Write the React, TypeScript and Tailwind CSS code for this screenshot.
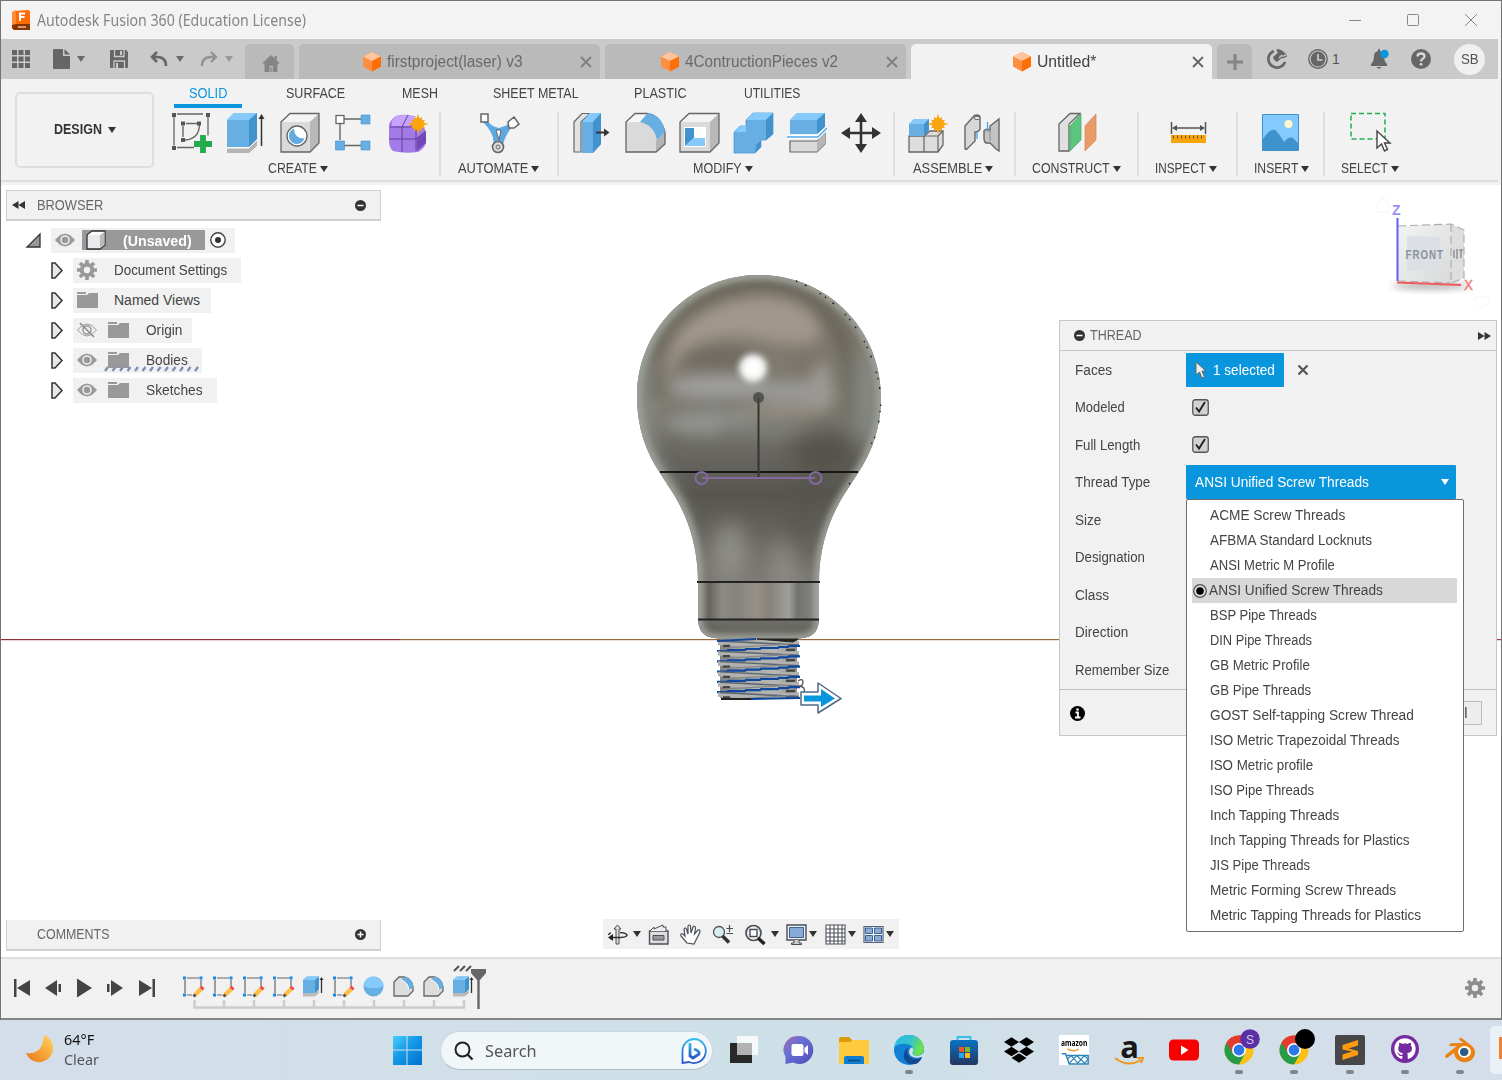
import { useLayoutEffect, useRef, useState } from "react";
import type { ReactNode } from "react";
import { SiDropbox, SiBlender } from "react-icons/si";
import { FaGithub } from "react-icons/fa";

/* Single line of text condensed or widened so that it spans a given width. */
function Fit({ w, className = "", children }: { w: number; className?: string; children: string }) {
  const ref = useRef<HTMLSpanElement>(null);
  const [natural, setNatural] = useState(w);
  useLayoutEffect(() => {
    if (ref.current) setNatural(ref.current.offsetWidth);
  }, [children]);
  return (
    <span className={`inline-block whitespace-pre ${className}`} style={{ width: `${w}px` }}>
      <span ref={ref} className="inline-block origin-left" style={{ transform: `scaleX(${w / natural})` }}>
        {children}
      </span>
    </span>
  );
}

function Caret({ className = "text-[#333]" }: { className?: string }) {
  return (
    <svg viewBox="0 0 8 6" className={`h-[6px] w-[8px] shrink-0 ${className}`}>
      <path d="M0 0H8L4 6Z" fill="currentColor" />
    </svg>
  );
}

function Ico({ children, className = "h-10 w-10", box = "0 0 40 40" }: { children: ReactNode; className?: string; box?: string }) {
  return (
    <svg viewBox={box} className={`shrink-0 overflow-visible ${className}`} fill="none">
      {children}
    </svg>
  );
}

const G = "#666";
const B1 = "#67aee3";
const B2 = "#86c9fb";
const B3 = "#4292cd";

function Star({ x, y }: { x: number; y: number }) {
  const pts: string[] = [];
  for (let i = 0; i < 24; i++) {
    const r = i % 2 ? 5.6 : i % 6 === 0 ? 10.5 : 8;
    const a = (i * Math.PI) / 12;
    pts.push(`${(x + r * Math.sin(a)).toFixed(2)},${(y - r * Math.cos(a)).toFixed(2)}`);
  }
  return <polygon points={pts.join(" ")} fill="#f8a40c" />;
}

function Cube() {
  return (
    <Ico box="0 0 18 20" className="h-5 w-[18px]">
      <path d="M9 0L18 4.5V14.5L9 19.500L0 14.500V4.500Z" fill="#ff8f40" />
      <path d="M9 0L18 4.500L9 9L0 4.500Z" fill="#ffc59f" />
      <path d="M9 9L18 4.500V14.500L9 19.500Z" fill="#ff6e05" />
    </Ico>
  );
}

/* ---------- title and tabs ---------- */

function TitleBar() {
  return (
    <div className="flex h-[38px] items-center bg-[#f3f3f3] pl-[11px] pr-[24px]">
      <Ico box="0 0 18 20" className="h-5 w-[18px]">
        <path d="M2 1L16 0Q18 0 18 2V20H2L0 18V3Z" fill="#ff6b00" />
        <path d="M0 14H18V20H2L0 18Z" fill="#8a3500" />
        <path d="M0 2L4 0V14L0 15Z" fill="#ff8b35" />
        <path d="M8 11V3.500H13M8 7H12.500" stroke="#fff" strokeWidth="2" />
        <path d="M6 17H14" stroke="#e8c0a0" strokeWidth="1.500" />
      </Ico>
      <Fit w={269} className="ml-[7px] font-['Noto_Sans'] text-[15.500px] leading-[37px] text-[#858585]">Autodesk Fusion 360 (Education License)</Fit>
      <div className="ml-auto flex items-center gap-[46px]">
        <Ico box="0 0 12 12" className="h-3 w-3"><path d="M0 6.500H12" stroke="#888" /></Ico>
        <Ico box="0 0 12 12" className="h-3 w-3"><rect x=".5" y=".5" width="11" height="11" rx="1" stroke="#888" /></Ico>
        <Ico box="0 0 12 12" className="h-3 w-3"><path d="M0 0L12 12M12 0L0 12" stroke="#888" /></Ico>
      </div>
    </div>
  );
}

function DocTab({ name, w, active, left }: { name: string; w: number; active?: boolean; left: string }) {
  return (
    <div className={`mt-[5px] flex h-[35px] w-[301px] items-center rounded-t-[5px] ${left} ${active ? "bg-[#f2f2f2] text-[#444]" : "bg-[#bababa] text-[#696969]"}`}>
      <Cube />
      <Fit w={w} className="ml-[6px] pt-px text-[16px]">{name}</Fit>
      <Ico box="0 0 10 10" className="ml-auto mr-[9px] h-[10px] w-[10px]">
        <path d="M0 0L10 10M10 0L0 10" stroke={active ? "#666" : "#808080"} strokeWidth="1.800" />
      </Ico>
    </div>
  );
}

function TabBar() {
  return (
    <div className="mr-[3px] flex h-10 bg-[#cacaca]">
      <div className="flex h-10 w-[244px] items-center pl-[11px]">
        <Ico box="0 0 18 18" className="h-[18px] w-[18px]">
          {[0, 6.500, 13].map((x) => [0, 6.500, 13].map((y) => <rect key={`${x}-${y}`} x={x} y={y} width="5" height="5" fill={G} />))}
        </Ico>
        <Ico box="0 0 17 20" className="ml-[23px] h-5 w-[17px]">
          <path d="M1 0H10V7H17V19Q17 20 16 20H1Q0 20 0 19V1Q0 0 1 0ZM11.500 0L17 5.500H11.500Z" fill={G} />
        </Ico>
        <Caret className="ml-[7px] text-[#6a6a6a]" />
        <Ico box="0 0 18 18" className="ml-[25px] h-[18px] w-[18px]">
          <path d="M1 0H16L18 2V17Q18 18 17 18H1Q0 18 0 17V1Q0 0 1 0Z" fill={G} />
          <path d="M4.500 0V6.500H14V0M4 18V11H14.500V18" stroke="#cacaca" strokeWidth="1.300" />
          <path d="M11 1V5" stroke="#cacaca" strokeWidth="2" /><path d="M7 13V18" stroke="#cacaca" strokeWidth="2" />
        </Ico>
        <Ico box="0 0 17 16" className="ml-[23px] h-4 w-[17px]">
          <path d="M6 1L1 6L6 11M1.500 6H7Q15 6.500 15 15" stroke={G} strokeWidth="2.600" />
        </Ico>
        <Caret className="ml-[8px] text-[#6a6a6a]" />
        <Ico box="0 0 17 16" className="ml-[16px] h-4 w-[17px]">
          <path d="M11 1L16 6L11 11M15.500 6H10Q2 6.500 2 15" stroke="#929292" strokeWidth="2.400" />
        </Ico>
        <Caret className="ml-[8px] text-[#999]" />
      </div>
      <div className="mt-[5px] flex h-[35px] w-[49px] items-center justify-center rounded-t-[5px] bg-[#bababa] pt-[4px]">
        <Ico box="0 0 18 17" className="ml-[3px] h-[17px] w-[18px]">
          <path d="M9 0L18 8.500H15.500V17H11V11H7.500V17H2.500V8.500H0ZM12.500 1H15V5L12.500 3Z" fill="#858585" />
          <path d="M8 12H10.500V17H8Z" fill="#9a9a9a" />
        </Ico>
      </div>
      <DocTab name="firstproject(laser) v3" w={135} left="ml-[5px] pl-[64px]" />
      <DocTab name="4ContructionPieces v2" w={153} left="ml-[5px] pl-[56px]" />
      <DocTab name="Untitled*" w={59} active left="ml-[5px] pl-[102px]" />
      <div className="ml-[5px] mt-[5px] flex h-[35px] w-[35px] items-center justify-center rounded-t-[5px] bg-[#bababa]">
        <Ico box="0 0 16 16" className="h-4 w-4"><path d="M8 0V16M0 8H16" stroke="#858585" strokeWidth="3.200" /></Ico>
      </div>
      <div className="flex h-10 items-center pl-[15px]">
        <Ico box="0 0 20 20" className="h-5 w-5">
          <circle cx="10" cy="10" r="8.600" stroke={G} strokeWidth="2.600" strokeDasharray="34 3 6 3 3 5" transform="rotate(20 10 10)" />
          <path d="M13 1L9.500 5L6 8Q7 12 10 13L14 9.500L17 9L20 6L17 3Z" fill={G} />
          <path d="M12 9L14.500 6.500L16 7.300L19.500 5.500" stroke="#cacaca" strokeWidth="1.300" />
        </Ico>
        <Ico box="0 0 20 20" className="ml-[21px] h-5 w-5">
          <circle cx="10" cy="10" r="9.200" stroke={G} strokeWidth="1.400" />
          <circle cx="10" cy="10" r="7.400" fill={G} />
          <path d="M10 5V11H14.500" stroke="#d0d0d0" strokeWidth="1.600" />
        </Ico>
        <span className="ml-[4px] w-[9px] text-[14px] text-[#555]">1</span>
        <Ico box="0 0 20 20" className="ml-[29px] h-5 w-5">
          <path d="M1 17V15Q4 12 4 7Q4 3 8 2V0H10V2Q14 3 14 7Q14 12 17 15V17ZM6.500 18H11.500Q9 21 6.500 18Z" fill={G} />
          <circle cx="14.500" cy="5" r="4.200" fill="#0a96dc" />
        </Ico>
        <Ico box="0 0 20 20" className="ml-[21px] h-5 w-5">
          <circle cx="10" cy="10" r="10" fill={G} />
          <path d="M6.500 7.500Q6.500 4.500 10 4.500Q13.500 4.500 13.500 7.300Q13.500 9 11.500 10Q10 10.800 10 12.500" stroke="#d8d8d8" strokeWidth="2.300" />
          <circle cx="10" cy="15.300" r="1.400" fill="#d8d8d8" />
        </Ico>
        <div className="ml-[23px] flex h-[31px] w-[31px] items-center justify-center rounded-full bg-[#f0f0f0]">
          <Fit w={18} className="text-[14px] text-[#555]">SB</Fit>
        </div>
      </div>
    </div>
  );
}

/* ---------- ribbon icons ---------- */

const icons: Record<string, ReactNode> = {
  sketch: (
    <Ico>
      <path d="M5 2.500H31M2 5V34M5 36H22M36 5V24" stroke={G} strokeWidth="1.300" transform="translate(0 -.5)" />
      <path d="M11 14V25M14 11.500H25M27.500 13Q27 27 13 28" stroke={G} strokeWidth="1.400" />
      {[[0, 1], [34, 1], [0, 34], [9, 9.500], [25, 9.500], [9, 26]].map(([x, y]) => <rect key={`${x}${y}`} x={x} y={y} width="4" height="4" fill="#555" />)}
      <path d="M31 23V41M22 32H40" stroke="#22ac4d" strokeWidth="5.800" />
    </Ico>
  ),
  extrude: (
    <Ico>
      <path d="M1 36H23L31 28V34L23 41H1Z" fill="#b5b5b5" /><path d="M1 36H23L31 28" stroke="#fff" />
      <path d="M1 8L8 1H31V27L23 35H1Z" fill={B1} />
      <path d="M1 8L8 1H31L23 8Z" fill={B2} /><path d="M23 8L31 1V27L23 35Z" fill={B3} />
      <path d="M35.500 4V34" stroke="#333" strokeWidth="1.500" /><path d="M32.500 7L35.500 2L38.500 7Z" fill="#333" />
    </Ico>
  ),
  hole: (
    <Ico>
      <path d="M1 10L10 1.500H39V31L30 40H1Z" fill="#dadada" /><path d="M1 10L10 1.500H39L30 10Z" fill="#f4f4f4" /><path d="M30 10L39 1.500V31L30 40Z" fill="#b8b8b8" />
      <path d="M1 10L10 1.500H39V31L30 40H1Z" stroke={G} strokeWidth="1.300" />
      <circle cx="17" cy="24" r="10" fill="#fff" stroke={G} strokeWidth="1.400" />
      <path d="M14 16.500Q14 26.500 24.500 26.500A8 8 0 1 1 14 16.500Z" fill="#62aae0" />
    </Ico>
  ),
  pattern: (
    <Ico>
      <path d="M10 7H27M6 12V28M10 33.500H27" stroke={G} strokeWidth="1.400" />
      <rect x="2" y="3.500" width="8" height="8" fill="#fff" stroke={G} strokeWidth="1.300" />
      <path d="M27 3H36V12H27ZM27 29H36V38H27ZM1.500 29H10.500V38H1.500Z" fill={B1} stroke={B3} strokeWidth=".6" />
    </Ico>
  ),
  form: (
    <Ico>
      <path d="M1 13Q2 8 8 4Q14 2 22 3L33 9L38 20V31Q36 37 30 40Q16 42 5 39Q1 36 1 28Z" fill="#a27be6" />
      <path d="M8 4Q16 2 28 4L22 14H4Q3 8 8 4Z" fill="#c8a2ff" /><path d="M29 26L38 20V31L29 39Z" fill="#7446b6" />
      <path d="M1 27H28L38 19M14 15V40M2 15H28V39M14 15L20 3" stroke="#61409c" strokeWidth="1" />
      <Star x={30} y={12} />
    </Ico>
  ),
  automate: (
    <Ico>
      <path d="M6 6Q12 15 20 16Q28 14 34 9L36 12Q27 20 24 33L19 40L14 34Q17 23 4 10Z" fill="#5ca9e2" />
      <path d="M17 18H22L20 28Z" fill="#fff" stroke={G} />
      <path d="M2 2H9V10H2ZM35 5L40 12L35 16H30L29 10Z" fill="#fff" stroke={G} strokeWidth="1.500" />
      <circle cx="19" cy="35" r="5.500" fill="#ddd" stroke={G} strokeWidth="1.600" /><circle cx="19" cy="35" r="2" stroke={G} />
    </Ico>
  ),
  press: (
    <Ico>
      <path d="M3 10L11 1.500H19L10 10V40H3Z" fill="#e2e2e2" stroke={G} strokeWidth="1.200" />
      <path d="M11 10L19 1H30V32L22 41H11Z" fill={B1} /><path d="M11 10L19 1H30L22 10Z" fill={B2} /><path d="M22 10L30 1V32L22 41Z" fill={B3} />
      <path d="M25 20.500H35" stroke="#333" strokeWidth="2" /><path d="M33 16.500L38.500 20.500L33 24.500Z" fill="#333" />
    </Ico>
  ),
  fillet: (
    <Ico>
      <path d="M1 10L10 1.500H22Q35 3 40 20V32L31 40H1Z" fill="#dadada" />
      <path d="M1 10L10 1.500H22L15 10Z" fill="#f7f7f7" /><path d="M31 29L40 20V32L31 40Z" fill="#b4b4b4" />
      <path d="M1 10L10 1.500H22Q35 3 40 20V32L31 40H1Z" stroke={G} strokeWidth="1.300" />
      <path d="M15 10L23 1Q37 3 40 20L32 28Q29 13 15 10Z" fill={B1} />
    </Ico>
  ),
  shell: (
    <Ico>
      <path d="M1 10L10 1.500H40V31L31 40H1Z" fill="#dadada" /><path d="M1 10L10 1.500H40L31 10Z" fill="#f4f4f4" /><path d="M31 10L40 1.500V31L31 40Z" fill="#b8b8b8" />
      <path d="M1 10L10 1.500H40V31L31 40H1Z" stroke={G} strokeWidth="1.300" />
      <path d="M5 15H27V35H5Z" fill="#fff" /><path d="M6 16L15 16V26L6 34Z" fill={B3} /><path d="M6 34L15 26H26V34Z" fill={B2} />
    </Ico>
  ),
  combine: (
    <Ico>
      <path d="M1 20L7 14H13V8L20 1H40V22L33 28H28V35L22 41H1Z" fill={B1} stroke={B3} strokeWidth=".7" />
      <path d="M13 8L20 1H40L33 8ZM1 20L7 14H13V20Z" fill={B2} /><path d="M33 8L40 1V22L33 28ZM23 33L28 28V35L22 41Z" fill={B3} />
    </Ico>
  ),
  split: (
    <Ico>
      <path d="M3 8L10 1H38V15L30 22H3Z" fill={B1} /><path d="M3 8L10 1H38L30 8Z" fill={B2} /><path d="M30 8L38 1V15L30 22Z" fill={B3} />
      <path d="M3 29H30L38 21V32L30 40H3Z" fill="#dadada" stroke={G} strokeWidth="1.200" /><path d="M30 29L38 21V32L30 40Z" fill="#b5b5b5" />
      <path d="M0 25H31L40 16" stroke="#fff" strokeWidth="4" /><path d="M0 25H31L40 16" stroke="#4eaced" strokeWidth="1.500" />
    </Ico>
  ),
  move: (
    <Ico>
      <path d="M20 6V36M5 21H35" stroke="#333" strokeWidth="2.600" />
      <path d="M14 10L20 1L26 10ZM14 32L20 41L26 32ZM9 15L0 21L9 27ZM31 15L40 21L31 27Z" fill="#333" />
    </Ico>
  ),
  assemble: (
    <Ico>
      <path d="M1 24H16L22 19H35V33L30 40H1Z" fill="#ddd" stroke={G} strokeWidth="1.300" /><path d="M16 24H30V40M16 24V40M30 24L35 19" stroke={G} strokeWidth="1.200" />
      <path d="M1 12L6 7H21V18L16 24H1Z" fill={B1} /><path d="M1 12L6 7H21L16 12Z" fill={B2} /><path d="M16 12L21 7V18L16 24Z" fill={B3} />
      <Star x={30} y={12} />
    </Ico>
  ),
  joint: (
    <Ico>
      <path d="M3 14L11 5Q12 3 15 3Q18 3 18 6V17Q17 20 13 20V29L5 37Q3 38 3 36Z" fill="#d8d8d8" stroke={G} strokeWidth="1.400" />
      <path d="M37 7V39L34 37L28 31H24Q22 30 22 27V19Q24 16 28 18V14Z" fill="#c4c4c4" stroke={G} strokeWidth="1.400" />
      <path d="M28 15V29" stroke="#8a8a8a" /><ellipse cx="15" cy="6" rx="3" ry="1.600" fill="#eee" stroke={G} />
      <path d="M15 20V27M25.500 10V20" stroke="#40a6ef" strokeWidth="1.300" />
    </Ico>
  ),
  construct: (
    <Ico>
      <path d="M2 12L13 1.500H23L12 12V39H2Z" fill="#e0e0e0" stroke={G} strokeWidth="1.300" />
      <path d="M13 14L24 2V28L13 39Z" fill="#5cc57e" stroke="#43ac64" strokeWidth=".7" /><path d="M28 14L39 2V28L28 39Z" fill="#e89b66" stroke="#d48650" strokeWidth=".7" />
    </Ico>
  ),
  inspect: (
    <Ico>
      <path d="M2.500 10V22M36.500 10V22M5 16H34" stroke="#555" strokeWidth="1.500" /><path d="M3 16L8 13V19ZM36 16L31 13V19Z" fill="#555" />
      <path d="M2 23H37V31H2Z" fill="#f8a40c" /><path d="M4 25H36" stroke="#725115" strokeWidth="3" strokeDasharray="1 3" />
    </Ico>
  ),
  insert: (
    <Ico>
      <path d="M2.500 2.500H38.500V38.500H2.500Z" fill="#84cafd" stroke="#3d91cc" />
      <path d="M3 27Q10 16 15 18Q18 20 24 30Q30 23 34 27L38 31V38H3Z" fill="#4092cd" /><circle cx="28.500" cy="12" r="4" fill="#fff8cd" />
    </Ico>
  ),
  select: (
    <Ico>
      <path d="M2 1.500H36V27H2Z" stroke="#22ae51" strokeWidth="1.500" strokeDasharray="5 3" />
      <path d="M28 19V36L32.500 32L35.500 39L38.500 37.500L35.500 31H41Z" fill="#fff" stroke="#444" strokeWidth="1.400" />
    </Ico>
  ),
};

const groups: { label: string; w: number; box: string; pad: string; items: string[]; lp: string }[] = [
  { label: "CREATE", w: 49, box: "w-[287px]", pad: "pl-[18px]", lp: "pl-[114px]", items: ["sketch", "extrude", "hole", "pattern", "form"] },
  { label: "AUTOMATE", w: 70, box: "w-[118px]", pad: "pl-[38px]", lp: "pl-[17px]", items: ["automate"] },
  { label: "MODIFY", w: 49, box: "w-[336px]", pad: "pl-[12px]", lp: "pl-[134px]", items: ["press", "fillet", "shell", "combine", "split", "move"] },
  { label: "ASSEMBLE", w: 69, box: "w-[121px]", pad: "pl-[13px]", lp: "pl-[18px]", items: ["assemble", "joint"] },
  { label: "CONSTRUCT", w: 78, box: "w-[123px]", pad: "pl-[41px]", lp: "pl-[16px]", items: ["construct"] },
  { label: "INSPECT", w: 51, box: "w-[99px]", pad: "pl-[30px]", lp: "pl-[16px]", items: ["inspect"] },
  { label: "INSERT", w: 44, box: "w-[87px]", pad: "pl-[22px]", lp: "pl-[16px]", items: ["insert"] },
  { label: "SELECT", w: 47, box: "w-[110px]", pad: "pl-[24px]", lp: "pl-[16px]", items: ["select"] },
];

function Ribbon() {
  return (
    <div className="h-[106px] bg-[#f2f2f2]">
      <div className="flex h-[101px]">
        <div className="ml-[14px] mt-[13px] flex h-[76px] w-[139px] items-center justify-center rounded-[5px] border-2 border-[#dedede]">
          <Fit w={48} className="text-[13.800px] font-bold text-[#333]">DESIGN</Fit>
          <Caret className="ml-[6px] text-[#333]" />
        </div>
        <div>
          <div className="flex h-[29px] text-[13.800px] leading-5 text-[#444]">
            <div className="ml-[20px] flex w-[68px] flex-col items-center border-b-4 border-[#0a96dc] pt-[5px] text-[#0a96dc]"><Fit w={38}>SOLID</Fit></div>
            <div className="ml-[44px] pt-[5px]"><Fit w={59}>SURFACE</Fit></div>
            <div className="ml-[57px] pt-[5px]"><Fit w={36}>MESH</Fit></div>
            <div className="ml-[55px] pt-[5px]"><Fit w={86}>SHEET METAL</Fit></div>
            <div className="ml-[55px] pt-[5px]"><Fit w={53}>PLASTIC</Fit></div>
            <div className="ml-[57px] pt-[5px]"><Fit w={56}>UTILITIES</Fit></div>
          </div>
          <div className="flex pt-[4px]">
            {groups.map((g, i) => (
              <div key={g.label} className={`h-[64px] ${g.box} ${i < 7 ? "border-r-2 border-[#dfdfdf]" : ""}`}>
                <div className={`flex h-[46px] gap-[14px] ${g.pad}`}>
                  {g.items.map((k) => <div key={k} className="shrink-0">{icons[k]}</div>)}
                </div>
                <div className={`flex items-center text-[13.800px] leading-5 text-[#444] ${g.lp}`}>
                  <Fit w={g.w} className="pt-px">{g.label}</Fit>
                  <Caret className="ml-[3px] text-[#333]" />
                </div>
              </div>
            ))}
          </div>
        </div>
      </div>
      <div className="mr-[3px] h-[2px] bg-[#dedede]" />
    </div>
  );
}

/* ---------- 3D viewport ---------- */

const bulbPath =
  "M759 275C827 275 881 329 881 397C881 427 872 452 858 473L849 487C834 509 819 540 819 582V619Q819 638 798 638.500H719Q698 638 698 619V582C698 540 684 509 669 487L660 473C646 452 637 427 637 397C637 329 691 275 759 275Z";

function Viewport() {
  return (
    <svg viewBox="1 185 1500 772" className="absolute inset-0 h-[772px] w-[1500px]">
      <defs>
        <clipPath id="bulb"><path d={bulbPath} /></clipPath>
        <filter id="b3" x="-50%" y="-50%" width="200%" height="200%" colorInterpolationFilters="sRGB"><feGaussianBlur stdDeviation="3" /></filter>
        <filter id="b6" x="-50%" y="-50%" width="200%" height="200%" colorInterpolationFilters="sRGB"><feGaussianBlur stdDeviation="7" /></filter>
        <filter id="b10" x="-50%" y="-50%" width="200%" height="200%" colorInterpolationFilters="sRGB"><feGaussianBlur stdDeviation="11" /></filter>
        <linearGradient id="body" x1="0" y1="275" x2="0" y2="640" gradientUnits="userSpaceOnUse">
          <stop offset="0" stopColor="#7d786d" /><stop offset=".35" stopColor="#807c73" /><stop offset=".5" stopColor="#666560" />
          <stop offset=".6" stopColor="#57554f" /><stop offset=".7" stopColor="#64625d" /><stop offset=".85" stopColor="#7e7b75" /><stop offset="1" stopColor="#65645f" />
        </linearGradient>
        <linearGradient id="collar" x1="698" y1="0" x2="819" y2="0" gradientUnits="userSpaceOnUse">
          <stop offset="0" stopColor="#8b8c85" /><stop offset=".09" stopColor="#66645d" /><stop offset=".2" stopColor="#8c8b85" /><stop offset=".32" stopColor="#85837f" />
          <stop offset=".48" stopColor="#979087" /><stop offset=".6" stopColor="#88827d" /><stop offset=".75" stopColor="#a09f9a" /><stop offset=".82" stopColor="#72756f" />
          <stop offset=".94" stopColor="#7f827b" /><stop offset="1" stopColor="#9fa39d" />
        </linearGradient>
        <linearGradient id="thread" x1="717" y1="0" x2="800" y2="0" gradientUnits="userSpaceOnUse">
          <stop offset="0" stopColor="#7d7e7e" /><stop offset=".3" stopColor="#a8a6a0" /><stop offset=".7" stopColor="#b7b8b4" /><stop offset="1" stopColor="#888" />
        </linearGradient>
        <linearGradient id="face" x1="0" y1="0" x2="1" y2="1"><stop offset="0" stopColor="#f2f3f3" /><stop offset="1" stopColor="#d9dada" /></linearGradient>
      </defs>
      <rect x="1" y="639" width="399" height="1.200" fill="#8e2f3e" /><rect x="400" y="639" width="660" height="1.200" fill="#9b6b37" /><rect x="1490" y="639" width="11" height="1.200" fill="#b03b44" />
      <g clipPath="url(#bulb)">
        <rect x="630" y="270" width="260" height="372" fill="url(#body)" />
        <g filter="url(#b6)">
          <path d="M655 400C655 335 700 286 760 284C825 286 862 345 850 420" stroke="#69655a" strokeWidth="15" fill="none" />
          <path d="M662 378C668 312 720 299 765 296C808 298 830 322 815 342C780 352 745 326 705 341C682 350 672 366 666 378Z" fill="#a1978a" />
          <ellipse cx="718" cy="358" rx="40" ry="10" fill="#6f6a61" />
          <ellipse cx="808" cy="362" rx="20" ry="16" fill="#7b756b" />
          <ellipse cx="724" cy="387" rx="56" ry="12" fill="#9e9e9c" />
          <ellipse cx="800" cy="394" rx="36" ry="14" fill="#989895" />
          <ellipse cx="821" cy="388" rx="10" ry="26" fill="#9c9993" />
          <ellipse cx="725" cy="403" rx="42" ry="5" fill="#7a7873" />
          <ellipse cx="710" cy="423" rx="46" ry="13" fill="#8f918c" />
          <ellipse cx="780" cy="411" rx="42" ry="9" fill="#918b80" />
          <ellipse cx="765" cy="430" rx="50" ry="8" fill="#7c7d78" />
          <path d="M640 400Q645 450 669 480Q690 520 697 570" stroke="#8d908a" strokeWidth="8" fill="none" />
        </g>
        <g filter="url(#b10)">
          <ellipse cx="825" cy="452" rx="36" ry="18" fill="#545048" />
          <ellipse cx="867" cy="400" rx="13" ry="55" fill="#868b85" />
          <ellipse cx="645" cy="400" rx="8" ry="50" fill="#8b8e88" />
          <ellipse cx="730" cy="553" rx="16" ry="30" fill="#92928b" />
          <ellipse cx="784" cy="568" rx="13" ry="28" fill="#918f89" />
          <path d="M820 470Q792 520 802 560" stroke="#55524b" strokeWidth="11" fill="none" />
        </g>
        <path d="M698 582H820V619H698Z" fill="url(#collar)" />
        <path d="M698 626Q759 642 820 626V642H698Z" fill="#5d5c56" filter="url(#b3)" />
        <path d={bulbPath} fill="none" stroke="#9ea39b" strokeWidth="9" filter="url(#b3)" />
      </g>
      <circle cx="753" cy="368" r="14" fill="#f2f2f0" filter="url(#b3)" /><circle cx="753" cy="368" r="8" fill="#fff" filter="url(#b3)" />
      <path d="M796 281Q870 312 881 397Q880 432 870 446M850 483L845 490" fill="none" stroke="#222" strokeWidth="1.400" strokeDasharray="1.500 8 2 15 1.500 5" />
      <path d="M660 472H858" stroke="#161616" strokeWidth="2" /><path d="M697 582H820M698 619.500H819" stroke="#222" strokeWidth="2" />
      <path d="M758.500 398V479" stroke="#353432" strokeWidth="2" /><circle cx="758.500" cy="397.500" r="5.500" fill="#444" opacity=".8" />
      <g stroke="#84699f" strokeWidth="2" fill="none"><path d="M702 478H815" /><circle cx="701.500" cy="478" r="6" /><circle cx="815.500" cy="478" r="6" /></g>
      <path d="M720 639H797V698H720Z" fill="url(#thread)" />
      {[0, 1, 2, 3, 4, 5].map((i) => {
        const y = 642 + i * 10.300;
        return (
          <g key={i}>
            <path d={`M718 ${y + 1}L758 ${y + 3}L799 ${y + 1}`} stroke="#b2b2af" strokeWidth="4.500" fill="none" />
            <path d={`M723 ${y + 4}H730M786 ${y + 8 > 698 ? 697 : y + 8}H795`} stroke="#444" strokeWidth="2.400" />
            <path d={`M720 ${y - 1}L758 ${y + 1}L799 ${y + 3}`} stroke="#5b6570" strokeWidth="1.400" fill="none" />
            <path d={`M723 ${y + 6}L758 ${y + 4}L790 ${y + 2}`} stroke="#85888b" strokeWidth="1.200" fill="none" />
            {i < 5 && <path d={`M717 ${y + 9}H727L728 ${y + 8}H745L746 ${y + 7}H760L761 ${y + 6}H778L779 ${y + 5}H788L789 ${y + 4}H800`} stroke="#10479f" strokeWidth="2.200" fill="none" />}
          </g>
        );
      })}
      <path d="M717 641L756 639" stroke="#164895" strokeWidth="2" /><path d="M757 639H798L793 642Z" fill="#222" stroke="#222" />
      <path d="M721 699H752" stroke="#222" strokeWidth="2" /><path d="M751 699L800 698" stroke="#0c469f" strokeWidth="2" />
      <path d="M798 681Q803 678 803 682Q803 686 799 686Q806 687 804 692" stroke="#555" strokeWidth="1.300" fill="none" />
      <path d="M801 692H818V683L841 698.500L818 713V705H801Z" fill="#fff" stroke="#4f6887" strokeWidth="1.500" strokeLinejoin="round" />
      <path d="M804 695.500H821V689L835 698.500L821 707V701.500H804Z" fill="#0996dc" />
      {/* view cube */}
      <ellipse cx="1430" cy="286" rx="38" ry="4" fill="#bbb" filter="url(#b3)" />
      <path d="M1398 226L1451 224V283L1398 281Z" fill="url(#face)" /><path d="M1451 224L1464 230V278L1451 283Z" fill="#dedede" />
      <path d="M1407 236L1440 237V271L1407 270Z" fill="#dce0e4" />
      <path d="M1398 226L1451 224L1464 230V278L1451 283M1398 281L1451 283M1451 224V283" stroke="#aaa" strokeWidth="1.100" strokeDasharray="8 4" fill="none" />
      <path d="M1397.500 218V281" stroke="#615ff6" strokeWidth="2" /><path d="M1397 282.500L1461 285" stroke="#ef5a5c" strokeWidth="2" />
      <g transform="translate(1405.500 259) scale(.72 1)">
        <text x="0" y="0" textLength="52" lengthAdjust="spacing" fontFamily="Liberation Sans" fontWeight="bold" fontSize="13.500" fill="#8b9299">FRONT</text>
      </g>
      <path d="M1454 250V258M1457 249V259M1459 250H1463M1461 250V258" stroke="#8e9499" strokeWidth="1.500" />
      <text x="1392" y="215" fontFamily="Liberation Sans" fontWeight="bold" fontSize="14" fill="#9491f8">Z</text>
      <text x="1464" y="290" textLength="9" lengthAdjust="spacingAndGlyphs" fontFamily="Liberation Sans" fontSize="15" fill="#f47575" stroke="#f47575" strokeWidth=".4">X</text>
      <path d="M1375 206L1383 197L1391 206M1377 206V212H1389V206M1475 297H1489V301L1482 308L1475 301Z" stroke="#f4f4f4" fill="none" />
    </svg>
  );
}

/* ---------- browser tree ---------- */

function Eye({ off }: { off?: boolean }) {
  return (
    <Ico box="0 0 20 14" className="h-[14px] w-5">
      <path d="M.5 7Q10 -5 19.500 7Q10 19 .5 7Z" fill={off ? "none" : "#999"} stroke="#999" />
      <circle cx="10" cy="7" r="4" fill={off ? "none" : "#999"} stroke={off ? "#999" : "#ececec"} strokeWidth="1.600" />
      {off && <path d="M3 0L17 14" stroke="#888" strokeWidth="1.500" />}
    </Ico>
  );
}

const Folder = ({ className = "" }: { className?: string }) => (
  <Ico box="0 0 21 16" className={`h-4 w-[21px] ${className}`}>
    <path d="M0 0H9V2H0ZM0 3H10L12 1H21V16H0Z" fill="#999" />
  </Ico>
);

const Expand = () => (
  <Ico box="0 0 12 17" className="h-[17px] w-3"><path d="M1 1H4L11 8.500L4 16H1Z" fill="#e8e8e8" stroke="#333" strokeWidth="1.500" /></Ico>
);

const rows = [
  { t: "Document Settings", w: 113, box: "w-[168px]", kind: "gear" },
  { t: "Named Views", w: 86, box: "w-[138px]", kind: "folder" },
  { t: "Origin", w: 36, box: "w-[119px]", kind: "off" },
  { t: "Bodies", w: 42, box: "w-[129px]", kind: "on" },
  { t: "Sketches", w: 57, box: "w-[144px]", kind: "on" },
];

function Gear({ className }: { className: string }) {
  return (
    <Ico box="0 0 20 20" className={className}>
      <circle cx="10" cy="10" r="5.200" stroke="currentColor" strokeWidth="4" />
      {[0, 45, 90, 135].map((a) => <path key={a} d="M10 0V4M10 16V20" stroke="currentColor" strokeWidth="3.600" transform={`rotate(${a} 10 10)`} />)}
    </Ico>
  );
}

function Browser() {
  return (
    <div className="absolute left-[5px] top-[5px] w-[375px]">
      <div className="flex h-[31px] items-center border border-b-2 border-[#cfcfcf] bg-[#f1f1f1] pl-[5px] pr-[14px]">
        <Ico box="0 0 13 8" className="h-2 w-[13px]"><path d="M6.500 0V8L0 4ZM13 0V8L6.500 4Z" fill="#333" /></Ico>
        <Fit w={66} className="ml-[12px] text-[14px] text-[#666]">BROWSER</Fit>
        <Ico box="0 0 11 11" className="ml-auto h-[11px] w-[11px]"><circle cx="5.500" cy="5.500" r="5.500" fill="#333" /><path d="M2.500 5.500H8.500" stroke="#fff" strokeWidth="1.500" /></Ico>
      </div>
      <div className="mt-[4px] flex h-[30px] items-center pl-[20px]">
        <Ico box="0 0 15 15" className="h-[15px] w-[15px]"><path d="M14 1V14H1Z" fill="#999" stroke="#333" strokeWidth="1.300" /></Ico>
        <div className="ml-[10px] flex h-[25px] w-[184px] items-center bg-[#f1f1f1] pl-[4px]">
          <Eye />
          <div className="ml-[7px] flex h-5 w-[123px] items-center bg-[#999] pl-[4px]">
            <Ico box="0 0 20 20" className="h-5 w-5"><path d="M1 5L6 1H19V15L14 19H1Z" fill="#e9e9ee" stroke="#333" strokeWidth="1.300" /><path d="M14 5L18.500 1.500V15L14 18.500Z" fill="#bbb" /><path d="M2 5L6 2H18L14 5Z" fill="#fff" /></Ico>
            <Fit w={69} className="ml-[17px] pt-px text-[14px] font-bold leading-5 text-white">(Unsaved)</Fit>
          </div>
          <Ico box="0 0 16 16" className="ml-[5px] h-4 w-4"><circle cx="8" cy="8" r="7.200" fill="#fff" stroke="#444" strokeWidth="1.400" /><circle cx="8" cy="8" r="3" fill="#333" /></Ico>
        </div>
      </div>
      {rows.map((r) => (
        <div key={r.t} className="flex h-[30px] items-center pl-[45px]">
          <Expand />
          <div className={`relative ml-[10px] flex h-[25px] items-center bg-[#f1f1f1] pl-[4px] text-[#444] ${r.box}`}>
            {r.kind === "gear" && <Gear className="mr-[17px] h-5 w-5 text-[#999]" />}
            {r.kind === "folder" && <Folder className="mr-[16px]" />}
            {(r.kind === "on" || r.kind === "off") && <><Eye off={r.kind === "off"} /><Folder className="ml-[11px] mr-[17px]" /></>}
            <Fit w={r.w} className="pt-px text-[14px]">{r.t}</Fit>
            {r.t === "Bodies" && (
              <svg viewBox="0 0 96 6" className="absolute bottom-[1px] left-[31px] h-[6px] w-24">
                {Array.from({ length: 13 }, (_, i) => <path key={i} d={`M${1 + i * 7.500} 5L${4 + i * 7.500} 1`} stroke="#7890b5" strokeWidth="2.400" />)}
              </svg>
            )}
          </div>
        </div>
      ))}
    </div>
  );
}

/* ---------- thread dialog ---------- */

const Check = () => (
  <Ico box="0 0 17 17" className="h-[17px] w-[17px]">
    <rect x=".75" y=".75" width="15.500" height="15.500" rx="2.500" fill="#d2d2d2" stroke="#555" strokeWidth="1.300" />
    <path d="M4 8.500L7 12.500L13 3" stroke="#222" strokeWidth="1.900" />
  </Ico>
);

const fields: [string, number][] = [["Faces", 37], ["Modeled", 50], ["Full Length", 65], ["Thread Type", 75], ["Size", 26], ["Designation", 70], ["Class", 34], ["Direction", 53], ["Remember Size", 94]];

const types: [string, number][] = [
  ["ACME Screw Threads", 135], ["AFBMA Standard Locknuts", 162], ["ANSI Metric M Profile", 125], ["ANSI Unified Screw Threads", 174],
  ["BSP Pipe Threads", 107], ["DIN Pipe Threads", 102], ["GB Metric Profile", 100], ["GB Pipe Threads", 101], ["GOST Self-tapping Screw Thread", 204],
  ["ISO Metric Trapezoidal Threads", 189], ["ISO Metric profile", 103], ["ISO Pipe Threads", 104], ["Inch Tapping Threads", 129],
  ["Inch Tapping Threads for Plastics", 200], ["JIS Pipe Threads", 100], ["Metric Forming Screw Threads", 186], ["Metric Tapping Threads for Plastics", 211],
];

function ThreadPanel() {
  return (
    <div className="absolute left-[1058px] top-[135px] h-[416px] w-[438px] border border-[#c6c6c6] bg-[#f1f1f1] text-[14px] leading-5 text-[#444]">
      <div className="flex h-[30px] items-center border-b border-[#c6c6c6] pl-[14px] pr-[5px]">
        <Ico box="0 0 11 11" className="h-[11px] w-[11px]"><circle cx="5.500" cy="5.500" r="5.500" fill="#333" /><path d="M2.500 5.500H8.500" stroke="#fff" strokeWidth="1.500" /></Ico>
        <Fit w={52} className="ml-[5px] pb-px text-[14px] text-[#666]">THREAD</Fit>
        <Ico box="0 0 13 8" className="ml-auto h-2 w-[13px]"><path d="M0 0V8L6.500 4ZM6.500 0V8L13 4Z" fill="#333" /></Ico>
      </div>
      <div className="h-[339px] border-b border-[#c0c0c0]">
        {fields.map(([f, w], i) => (
          <div key={f} className="flex h-[37.500px] items-center pl-[15px]">
            <div className="w-[111px]"><Fit w={w}>{f}</Fit></div>
            {i === 0 && (
              <>
                <div className="flex h-[34px] w-[98px] items-center rounded-[1px] bg-[#0a96dc] pl-[9px] text-white">
                  <Ico box="0 0 12 18" className="h-[18px] w-3"><path d="M1 1V14L4.500 11L7 17L9.500 16L7 10H11Z" fill="#eee" stroke="#666" /></Ico>
                  <Fit w={62} className="ml-[6px]">1 selected</Fit>
                </div>
                <Ico box="0 0 10 10" className="ml-[14px] h-[10px] w-[10px]"><path d="M.5 .5L9.500 9.500M9.500 .5L.5 9.500" stroke="#555" strokeWidth="2.200" /></Ico>
              </>
            )}
            {(i === 1 || i === 2) && <div className="ml-[6px]"><Check /></div>}
            {i === 3 && (
              <div className="flex h-[34px] w-[270px] items-center justify-between rounded-[1px] bg-[#0a96dc] pl-[9px] pr-[7px] text-white">
                <Fit w={174}>ANSI Unified Screw Threads</Fit><Caret className="text-white" />
              </div>
            )}
          </div>
        ))}
      </div>
      <div className="flex h-[46px] items-center justify-between pl-[10px] pr-[14px]">
        <Ico box="0 0 15 15" className="h-[15px] w-[15px]"><circle cx="7.500" cy="7.500" r="7.500" fill="#000" /><path d="M5.500 6.500H8V11M5 11.500H10.500" stroke="#fff" strokeWidth="1.800" /><circle cx="7.500" cy="3.500" r="1.300" fill="#fff" /></Ico>
        <div className="flex h-6 w-[75px] items-center justify-center border border-[#bbb] bg-[#ededed]"><Fit w={46}>Cancel</Fit></div>
      </div>
      <div className="absolute left-[126px] top-[178px] h-[433px] w-[278px] rounded-[2px] border border-[#6f6f6f] bg-white pt-[3px]">
        {types.map(([t, w], i) => (
          <div key={t} className={`ml-[5px] flex h-[25px] w-[265px] items-center ${i === 3 ? "bg-[#d8d8d8]" : "pl-[18px]"}`}>
            {i === 3 && <Ico box="0 0 14 14" className="ml-[1px] mr-[2px] h-[14px] w-[14px]"><circle cx="7" cy="7" r="6.300" fill="#ddd" stroke="#555" strokeWidth="1.300" /><circle cx="7" cy="7" r="3.800" fill="#000" /></Ico>}
            <Fit w={w} className="pb-px">{t}</Fit>
          </div>
        ))}
      </div>
    </div>
  );
}

/* ---------- viewport navigation ---------- */

const N = "#4a5058";
const navBox = "h-[21px] w-[21px]";

function NavBar() {
  return (
    <div className="absolute left-[602px] top-[734px] flex h-[30px] w-[296px] items-center bg-[#f1f1f1] pl-[4px]">
      <Ico box="0 0 21 21" className={navBox}>
        <path d="M9 20V5H7L10.500 1L14 5H12V20Z" fill="#ddd" stroke={N} />
        <path d="M4 9Q2 9 1.500 11M13 8.500Q20 9 20 11.500Q19 14 5 13.500" stroke="#333" strokeWidth="1.500" /><path d="M6 10L1 13.500L6 17Z" fill="#222" />
      </Ico>
      <Caret className="ml-[5px] text-[#333]" />
      <Ico box="0 0 21 21" className={`ml-[7px] ${navBox}`}>
        <path d="M1.500 7H20V20H1.500Z" fill="#ddd" stroke={N} strokeWidth="1.400" /><path d="M5 11.500H16V16H5Z" fill="#999" stroke={N} />
        <path d="M2 7L6 3V5L15 1V3H18V7" fill="#eee" stroke={N} />
      </Ico>
      <Ico box="0 0 21 21" className={`ml-[11px] ${navBox}`}>
        <path d="M7 19L1 12Q0 9 3 10L5 12L4 5Q5 3 6.500 5L8 10V2Q9.500 0 10.500 2L11 9L13 3Q15 1 15.500 4L14.500 10L18 6Q20 5 20 8L16 16L14 20Z" fill="#fff" stroke={N} strokeWidth="1.200" />
      </Ico>
      <Ico box="0 0 21 21" className={`ml-[11px] ${navBox}`}>
        <circle cx="7" cy="8" r="5.500" fill="#d8ebf2" stroke={N} strokeWidth="1.300" /><path d="M10.500 12L17 18.500" stroke="#333" strokeWidth="3.500" />
        <path d="M17.500 1V8M14.500 4.500H21M14.500 9.500H21" stroke={N} strokeWidth="1.200" />
      </Ico>
      <Ico box="0 0 21 21" className={`ml-[12px] ${navBox}`}>
        <circle cx="8.500" cy="9" r="7.500" fill="#eee" stroke={N} strokeWidth="1.700" /><path d="M5 5.500H12V12.500H5Z" fill="#fff" stroke={N} strokeWidth="1.400" /><path d="M13 14L19.500 20" stroke="#222" strokeWidth="3.500" />
      </Ico>
      <Caret className="ml-[5px] text-[#333]" />
      <Ico box="0 0 21 21" className={`ml-[7px] ${navBox}`}>
        <path d="M1 1H20V16H1Z" fill="#eee" stroke={N} strokeWidth="1.400" /><path d="M3.500 3.500H17.500V13.500H3.500Z" fill="#87abd6" stroke="#416596" /><path d="M8 16V19H5.500V20.500H15.500V19H13V16" fill="#ccc" stroke={N} />
      </Ico>
      <Caret className="ml-[2px] text-[#333]" />
      <Ico box="0 0 21 21" className={`ml-[8px] ${navBox}`}>
        <path d="M1 1H20V20H1ZM5 1V20M9 1V20M13 1V20M17 1V20M1 5H20M1 9H20M1 13H20M1 17H20" stroke={N} fill="#fff" strokeWidth="1.100" />
      </Ico>
      <Caret className="ml-[2px] text-[#333]" />
      <Ico box="0 0 21 21" className={`ml-[7px] ${navBox}`}>
        <path d="M1 2.500H20V18.500H1Z" fill="#fff" stroke="#52647c" strokeWidth="1.200" /><path d="M2.500 4H9.500V9.500H2.500ZM11.500 4H18.500V9.500H11.500ZM2.500 11.500H9.500V17H2.500ZM11.500 11.500H18.500V17H11.500Z" fill="#89abd6" stroke="#3c5e91" />
      </Ico>
      <Caret className="ml-[2px] text-[#333]" />
    </div>
  );
}

/* ---------- timeline ---------- */

const tSketch = (
  <Ico box="0 0 21 21" className="h-[21px] w-[21px]">
    <path d="M2 4V17M4 2H16M18 4V10M4 19H9" stroke="#666" strokeWidth="1.200" />
    <path d="M0 .5H3V3.500H0ZM16.500 .5H19.500V3.500H16.500ZM0 17.500H3V20.500H0Z" fill="#1688e5" />
    <path d="M12 19L18 13" stroke="#ffbf45" strokeWidth="4.500" /><path d="M18 13L20 11" stroke="#f04848" strokeWidth="4.500" /><path d="M10.500 20.500L12.500 18.500" stroke="#555" strokeWidth="3" />
  </Ico>
);
const tExtrude = (
  <Ico box="0 0 21 21" className="h-[21px] w-[21px]">
    <path d="M0 17H12L16 14V17L12 20.500H0Z" fill="#bbb" /><path d="M0 4L4 .5H16V13L12 17H0Z" fill={B1} /><path d="M0 4L4 .5H16L12 4Z" fill={B2} /><path d="M12 4L16 .5V13L12 17Z" fill={B3} />
    <path d="M18.500 3V17" stroke="#333" strokeWidth="1.300" /><path d="M16.500 4L18.500 1L20.500 4Z" fill="#333" />
  </Ico>
);
const tFillet = (
  <Ico box="0 0 21 21" className="h-[21px] w-[21px]">
    <path d="M1 6L6 1H12Q19 3 20 11V15L15 20H1Z" fill="#ddd" stroke="#666" strokeWidth="1.300" />
    <path d="M8 4L11.500 .7Q19 2 20.500 11L16 14Q15 6 8 4Z" fill={B1} /><path d="M8 4Q15 6 16 14" stroke="#fff" />
  </Ico>
);
const tSphere = (
  <Ico box="0 0 21 21" className="h-[21px] w-[21px]"><circle cx="10.500" cy="10.500" r="10" fill={B1} /><path d="M.5 10.500A10 10 0 0 1 20.500 10.500Q10.500 14 .5 10.500Z" fill={B2} /></Ico>
);

function Timeline() {
  return (
    <div className="relative flex h-[63px] border-b-2 border-t-2 border-b-[#858585] border-t-[#dedede] bg-[#f1f1f1] pl-[13px]">
      <div className="mt-[20px] flex h-[18px] gap-[15px] text-[#444]">
        <Ico box="0 0 16 18" className="h-[18px] w-4"><path d="M0 0H2.500V18H0ZM16 1V17L3 9Z" fill="currentColor" /></Ico>
        <Ico box="0 0 16 18" className="h-[18px] w-4"><path d="M0 9L12 1V17ZM13.500 5H16V13H13.500Z" fill="currentColor" /></Ico>
        <Ico box="0 0 16 18" className="h-[18px] w-4"><path d="M1 -.5V18.500L16 9Z" fill="currentColor" /></Ico>
        <Ico box="0 0 16 18" className="h-[18px] w-4"><path d="M0 5H2.500V13H0ZM4 1V17L16 9Z" fill="currentColor" /></Ico>
        <Ico box="0 0 16 18" className="ml-[1px] h-[18px] w-4"><path d="M13.500 0H16V18H13.500ZM0 1V17L13 9Z" fill="currentColor" /></Ico>
      </div>
      <div className="ml-[28px] mt-[17px] flex h-[21px] gap-[9px]">
        {[tSketch, tSketch, tSketch, tSketch, tExtrude, tSketch, tSphere, tFillet, tFillet, tExtrude].map((x, i) => <div key={i}>{x}</div>)}
      </div>
      <svg viewBox="183 959 310 56" className="absolute left-[182px] top-0 h-14 w-[310px]" fill="none">
        <path d="M194.500 1000V1007.500H464V1000" stroke="#ccc" strokeWidth="2.400" />
        {[224, 254, 284, 314, 344, 374, 404, 434].map((x) => <path key={x} d={`M${x} 1000V1007`} stroke="#ccc" strokeWidth="2.400" />)}
        <path d="M454 971L459 966M460 971L465 966M466 971L471 966" stroke="#555" strokeWidth="2" />
        <path d="M471 969H486V973L480 980H477L471 973Z" fill={G} /><path d="M478.500 978V1009" stroke={G} strokeWidth="2.400" />
      </svg>
      <Gear className="ml-auto mr-[16px] mt-[19px] h-5 w-5 text-[#8d8d8d]" />
    </div>
  );
}

/* ---------- taskbar ---------- */

function Chrome({ children }: { children: ReactNode }) {
  return (
    <Ico box="0 0 30 30" className="h-[30px] w-[30px]">
      <circle cx="15" cy="15" r="14.500" fill="#fbc116" /><path d="M15 15L2.500 7.700A14.500 14.500 0 0 1 27.500 7.700Z" fill="#e33b2e" />
      <path d="M15 15L2.500 7.700A14.500 14.500 0 0 0 15 29.500L21.500 18Z" fill="#269b4a" />
      <path d="M15 8H27.700A14.500 14.500 0 0 0 2.500 7.700L9 18Z" fill="#e33b2e" />
      <circle cx="15" cy="15" r="7" fill="#fff" /><circle cx="15" cy="15" r="5.400" fill="#2d75eb" />
      {children}
    </Ico>
  );
}

const apps: ReactNode[] = [
  <Ico box="0 0 30 30" className="h-[30px] w-[30px]"><path d="M1 8H23V28H1Z" fill="#292929" /><path d="M8 1H29V20H8Z" fill="#fff" opacity=".8" /><path d="M8 8H23V20H8Z" fill="#b2b2b2" /></Ico>,
  <Ico box="0 0 30 30" className="h-[30px] w-[30px]">
    <defs><linearGradient id="chat" x1="0" y1="0" x2="1" y2="1"><stop stopColor="#a66bb0" /><stop offset=".4" stopColor="#6570d5" /><stop offset="1" stopColor="#504bb8" /></linearGradient></defs>
    <path d="M15 1A14 14 0 1 1 9 27.500L1.500 29V22A14 14 0 0 1 15 1Z" fill="url(#chat)" /><rect x="7.500" y="9" width="12" height="12" rx="2" fill="#fff" /><path d="M20.500 13L24 10V20L20.500 17Z" fill="#fff" />
  </Ico>,
  <Ico box="0 0 30 30" className="h-[30px] w-[30px]">
    <path d="M0 4Q0 2 2 2H10L13 5V10H0Z" fill="#df9a08" /><path d="M0 7H11L14 5H30V29H0Z" fill="#ffca3d" /><path d="M5 29V23Q5 21 7 21H23Q25 21 25 23V29Z" fill="#0d7ed0" /><path d="M9 25.500H21" stroke="#064a83" strokeWidth="1.500" />
  </Ico>,
  <Ico box="0 0 30 30" className="h-[30px] w-[30px]">
    <defs><linearGradient id="edge" x1="0" y1="0" x2="1" y2=".3"><stop stopColor="#2ab8e8" /><stop offset=".6" stopColor="#36c4cb" /><stop offset="1" stopColor="#6be347" /></linearGradient></defs>
    <circle cx="15" cy="15" r="15" fill="#1280d5" />
    <path d="M0 13Q2 0 15 0Q29 1 30 14Q29 21 22 21Q17 20 19 16Q20 10 12 9Q4 8 0 13Z" fill="url(#edge)" />
    <path d="M12 14Q6 23 15 29Q25 31 28 22Q22 26 16 22Q12 18 14 13Z" fill="#124b91" />
    <path d="M19 16Q17 20 22 21Q28 21 29.500 17L31 23L28 22Q21 24 17 21Q13 17 17 12.500Q20 13 19 16Z" fill="#d3e2ea" />
  </Ico>,
  <Ico box="0 0 30 30" className="h-[30px] w-[30px]">
    <defs><linearGradient id="store" x1="0" y1="0" x2="0" y2="1"><stop stopColor="#0873c4" /><stop offset="1" stopColor="#25365f" /></linearGradient></defs>
    <path d="M8.500 6V2H21.500V6" stroke="#37bdf0" strokeWidth="2" /><rect x="1" y="5" width="28" height="25" rx="3" fill="url(#store)" />
    <path d="M10 12H15V17H10Z" fill="#f4552b" /><path d="M16 12H21V17H16Z" fill="#7fbb20" /><path d="M10 18H15V23H10Z" fill="#22a7ef" /><path d="M16 18H21V23H16Z" fill="#ffba1a" />
  </Ico>,
  <SiDropbox className="h-[30px] w-[30px] text-black" />,
  <div className="relative flex h-[30px] w-[30px] flex-col items-center bg-white pt-[3px]">
    <Fit w={26} className="text-[9px] font-bold leading-[10px] text-black">amazon</Fit>
    <svg viewBox="0 0 30 18" className="h-[17px] w-[30px]" fill="none">
      <path d="M8 1Q15 5 20 1" stroke="#e99a37" strokeWidth="1.500" /><path d="M2 6H6L10 17H30V8H7" stroke="#2d83b7" strokeWidth="1.500" />
      <path d="M8 12L12 8L19 16L26 8L30 12M10 16L18 8L26 16L30 12" stroke="#2d83b7" strokeWidth="1.300" />
    </svg>
  </div>,
  <div className="relative h-[30px] w-[30px]">
    <span className="absolute left-[6px] top-[-7px] font-['Open_Sans'] text-[31px] font-bold leading-9 text-[#181818]">a</span>
    <svg viewBox="0 0 30 10" className="absolute bottom-0 left-0 h-[10px] w-[30px]" fill="none"><path d="M1 3Q14 13 27 5M23 3H29L27 8" stroke="#ef981e" strokeWidth="2" /></svg>
  </div>,
  <Ico box="0 0 30 30" className="h-[30px] w-[30px]"><rect y="4.500" width="30" height="21" rx="4.500" fill="#f80000" /><path d="M12 10.500V20L19.500 15Z" fill="#fff" /></Ico>,
  <Chrome><circle cx="26" cy="4" r="9.800" fill="#5b2fa5" /><text x="26" y="8.500" textAnchor="middle" fontFamily="Liberation Sans" fontSize="12" fill="#d5c5ed">S</text></Chrome>,
  <Chrome><circle cx="26" cy="4" r="10" fill="#000" /></Chrome>,
  <Ico box="0 0 30 30" className="h-[30px] w-[30px]"><rect width="30" height="30" rx="2" fill="#474747" /><path d="M7.500 10L23 5V10.500L13.500 13.600L23 16V20L7.500 25V19.500L17 16.400L7.500 14.500Z" fill="#ff9a0d" /></Ico>,
  <div className="flex h-7 w-7 items-center justify-center rounded-full bg-[#732b9f]"><FaGithub className="h-[22px] w-[22px] text-white" /></div>,
  <div className="relative h-[30px] w-[30px]">
    <div className="absolute left-[11px] top-[10px] h-[14px] w-[15px] rounded-full bg-white" />
    <SiBlender className="relative h-[30px] w-[30px] text-[#e98217]" />
    <div className="absolute left-[15px] top-[13px] h-[8px] w-[8px] rounded-full bg-[#275d8d]" />
  </div>,
];

function Taskbar() {
  return (
    <div className="flex h-[60px] overflow-hidden bg-linear-to-r from-[#d4deea] via-[#cee0e7] to-[#d4deea] font-['Noto_Sans']">
      <div className="flex w-[392px] shrink-0 pl-[26px]">
        <Ico box="0 0 28 28" className="mt-[15px] h-7 w-7">
          <defs><linearGradient id="moon" x1="1" y1="0" x2="0" y2="1"><stop stopColor="#ffd85a" /><stop offset="1" stopColor="#ed731b" /></linearGradient></defs>
          <path d="M18 0A14 14 0 1 1 0 18Q17 20 18 0Z" fill="url(#moon)" />
        </Ico>
        <div className="ml-[10px] mt-[10px] flex flex-col text-[14px] leading-5">
          <Fit w={30} className="text-[#111]">64°F</Fit><Fit w={35} className="text-[#555]">Clear</Fit>
        </div>
      </div>
      <Ico box="0 0 30 30" className="mt-[15px] h-[30px] w-[30px]">
        <defs><linearGradient id="win" x1="0" y1="0" x2="30" y2="30" gradientUnits="userSpaceOnUse"><stop stopColor="#50d3ff" /><stop offset=".45" stopColor="#169be8" /><stop offset="1" stopColor="#006fd0" /></linearGradient></defs>
        <path d="M1 1H14.500V14.500H1ZM15.500 1H30V14.500H15.500ZM1 15.500H14.500V30H1ZM15.500 15.500H30V30H15.500Z" fill="url(#win)" />
      </Ico>
      <div className="ml-[18px] mt-[11px] flex h-[39px] w-[273px] shrink-0 items-center rounded-full border border-b-[#aebdca] border-[#cbd8e0] bg-[#f1f6f9] pl-[13px] pr-[5px]">
        <Ico box="0 0 20 20" className="h-5 w-5"><circle cx="8.500" cy="8.500" r="7" stroke="#222" strokeWidth="2" /><path d="M13.500 13.500L18.500 18.500" stroke="#222" strokeWidth="2.400" /></Ico>
        <Fit w={52} className="ml-[11px] text-[16px] text-[#555]">Search</Fit>
        <Ico box="0 0 26 26" className="ml-auto h-[26px] w-[26px]">
          <defs><linearGradient id="bing" x1="0" y1="0" x2="0" y2="1"><stop stopColor="#35bdec" /><stop offset="1" stopColor="#2755cb" /></linearGradient></defs>
          <path d="M13 1A12 12 0 1 1 8 24L1.500 25V13A12 12 0 0 1 13 1Z" fill="#fff" stroke="url(#bing)" strokeWidth="1.800" />
          <path d="M9 5V18L12 20L18 16Q19 13 13 11" stroke="url(#bing)" strokeWidth="2.800" />
        </Ico>
      </div>
      <div className="ml-[3px] flex shrink-0">
        {apps.map((a, i) => (
          <div key={i} className="relative flex w-[55.100px] shrink-0 justify-center pt-[15px]">
            {a}
            {(i === 3 || i > 8) && <div className="absolute bottom-[6px] h-[4px] w-[8px] rounded-full bg-[#7e858b]" />}
          </div>
        ))}
      </div>
      <div className="ml-[3px] mt-[6px] h-12 w-5 shrink-0 rounded-l-[5px] bg-[#e9f0f6] pl-[9px] pt-[11px]"><div className="h-[22px] w-5 bg-[#f18134]" /></div>
    </div>
  );
}

export default function App() {
  return (
    <div className="h-[1080px] w-[1502px] overflow-hidden bg-white font-['Liberation_Sans',sans-serif]">
      <div className="flex h-[1020px] flex-col border-x border-t border-[#737373] bg-[#f2f2f2]">
        <TitleBar />
        <TabBar />
        <Ribbon />
        <div className="relative h-[772px] shrink-0 overflow-hidden bg-white">
          <Viewport />
          <Browser />
          <div className="absolute left-[5px] top-[735px] flex h-[31px] w-[375px] items-center border-x border-b-2 border-[#cfcfcf] bg-[#f1f1f1] pl-[30px] pr-[14px]">
            <Fit w={72} className="pt-[2px] text-[13.800px] text-[#666]">COMMENTS</Fit>
            <Ico box="0 0 11 11" className="ml-auto h-[11px] w-[11px]"><circle cx="5.500" cy="5.500" r="5.500" fill="#333" /><path d="M2.500 5.500H8.500M5.500 2.500V8.500" stroke="#fff" strokeWidth="1.500" /></Ico>
          </div>
          <NavBar />
          <ThreadPanel />
        </div>
        <Timeline />
      </div>
      <Taskbar />
    </div>
  );
}
